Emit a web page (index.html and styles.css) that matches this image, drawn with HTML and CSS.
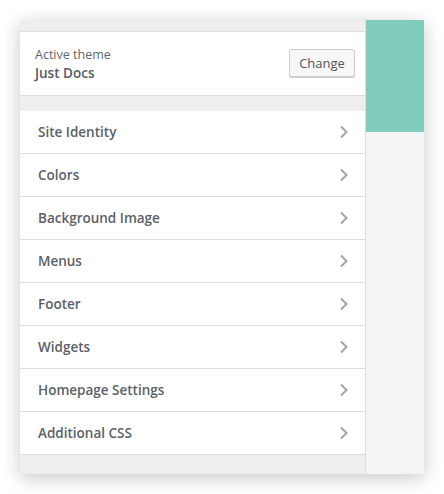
FILE: index.html
```html
<!DOCTYPE html>
<html>
<head>
<meta charset="utf-8">
<link rel="stylesheet" href="styles.css">
</head>
<body>
<div class="frame">
  <div class="panel">
    <div class="strip"></div>
    <div class="theme">
      <div class="theme-info">
        <div class="theme-label">Active theme</div>
        <div class="theme-name">Just Docs</div>
      </div>
      <button class="change">Change</button>
    </div>
    <div class="gap"></div>
    <ul class="sections">
      <li class="section"><span>Site Identity</span><svg class="chev" viewBox="0 0 10 14" width="10" height="14"><path d="M2 1.5 L7.5 7 L2 12.5" /></svg></li>
      <li class="section"><span>Colors</span><svg class="chev" viewBox="0 0 10 14" width="10" height="14"><path d="M2 1.5 L7.5 7 L2 12.5" /></svg></li>
      <li class="section"><span>Background Image</span><svg class="chev" viewBox="0 0 10 14" width="10" height="14"><path d="M2 1.5 L7.5 7 L2 12.5" /></svg></li>
      <li class="section"><span>Menus</span><svg class="chev" viewBox="0 0 10 14" width="10" height="14"><path d="M2 1.5 L7.5 7 L2 12.5" /></svg></li>
      <li class="section"><span>Footer</span><svg class="chev" viewBox="0 0 10 14" width="10" height="14"><path d="M2 1.5 L7.5 7 L2 12.5" /></svg></li>
      <li class="section"><span>Widgets</span><svg class="chev" viewBox="0 0 10 14" width="10" height="14"><path d="M2 1.5 L7.5 7 L2 12.5" /></svg></li>
      <li class="section"><span>Homepage Settings</span><svg class="chev" viewBox="0 0 10 14" width="10" height="14"><path d="M2 1.5 L7.5 7 L2 12.5" /></svg></li>
      <li class="section"><span>Additional CSS</span><svg class="chev" viewBox="0 0 10 14" width="10" height="14"><path d="M2 1.5 L7.5 7 L2 12.5" /></svg></li>
    </ul>
    <div class="bottom"></div>
  </div>
  <div class="preview">
    <div class="preview-head"></div>
  </div>
</div>
</body>
</html>
```

FILE: styles.css
```css
* { box-sizing: border-box; }
html, body { margin: 0; padding: 0; background: #fff; }
body {
  padding: 20px;
  font-family: "Open Sans", "Noto Sans", sans-serif;
  color: #555d66;
}
.frame {
  width: 404px;
  height: 454px;
  display: flex;
  box-shadow: 0 4px 18px rgba(0,0,0,0.22);
  background: #eeeeee;
}
.panel {
  width: 346px;
  display: flex;
  flex-direction: column;
  background: #eeeeee;
  border-right: 1px solid #dddddd;
}
.strip {
  height: 12px;
  border-bottom: 1px solid #dddddd;
}
.theme {
  height: 64px;
  background: #fff;
  border-bottom: 1px solid #dddddd;
  display: flex;
  align-items: center;
  justify-content: space-between;
  padding: 0 10px 0 15px;
}
.theme-label {
  font-size: 12.5px;
  line-height: 18px;
  color: #5f666d;
}
.theme-name {
  font-size: 13.5px;
  font-weight: 600;
  line-height: 18px;
  color: #555d66;
}
.change {
  font-family: inherit;
  font-size: 13px;
  color: #555;
  background: #f7f7f7;
  border: 1px solid #cccccc;
  border-radius: 3px;
  box-shadow: 0 1px 0 #cccccc;
  height: 28px;
  width: 66px;
  padding: 0;
  margin-top: -2px;
}
.gap { height: 15px; }
.sections {
  list-style: none;
  margin: 0;
  padding: 0;
}
.section {
  height: 43px;
  background: #fff;
  border-bottom: 1px solid #dddddd;
  display: flex;
  align-items: center;
  justify-content: space-between;
  padding: 0 16px 0 18px;
  font-size: 13.5px;
  font-weight: 600;
  color: #5a6168;
}
.chev {
  fill: none;
  stroke: #a0a5aa;
  stroke-width: 2;
}
.bottom { flex: 1; }
.preview {
  flex: 1;
  background: #f3f4f6;
}
.preview-head {
  height: 112px;
  background: #80cdbe;
}
```
